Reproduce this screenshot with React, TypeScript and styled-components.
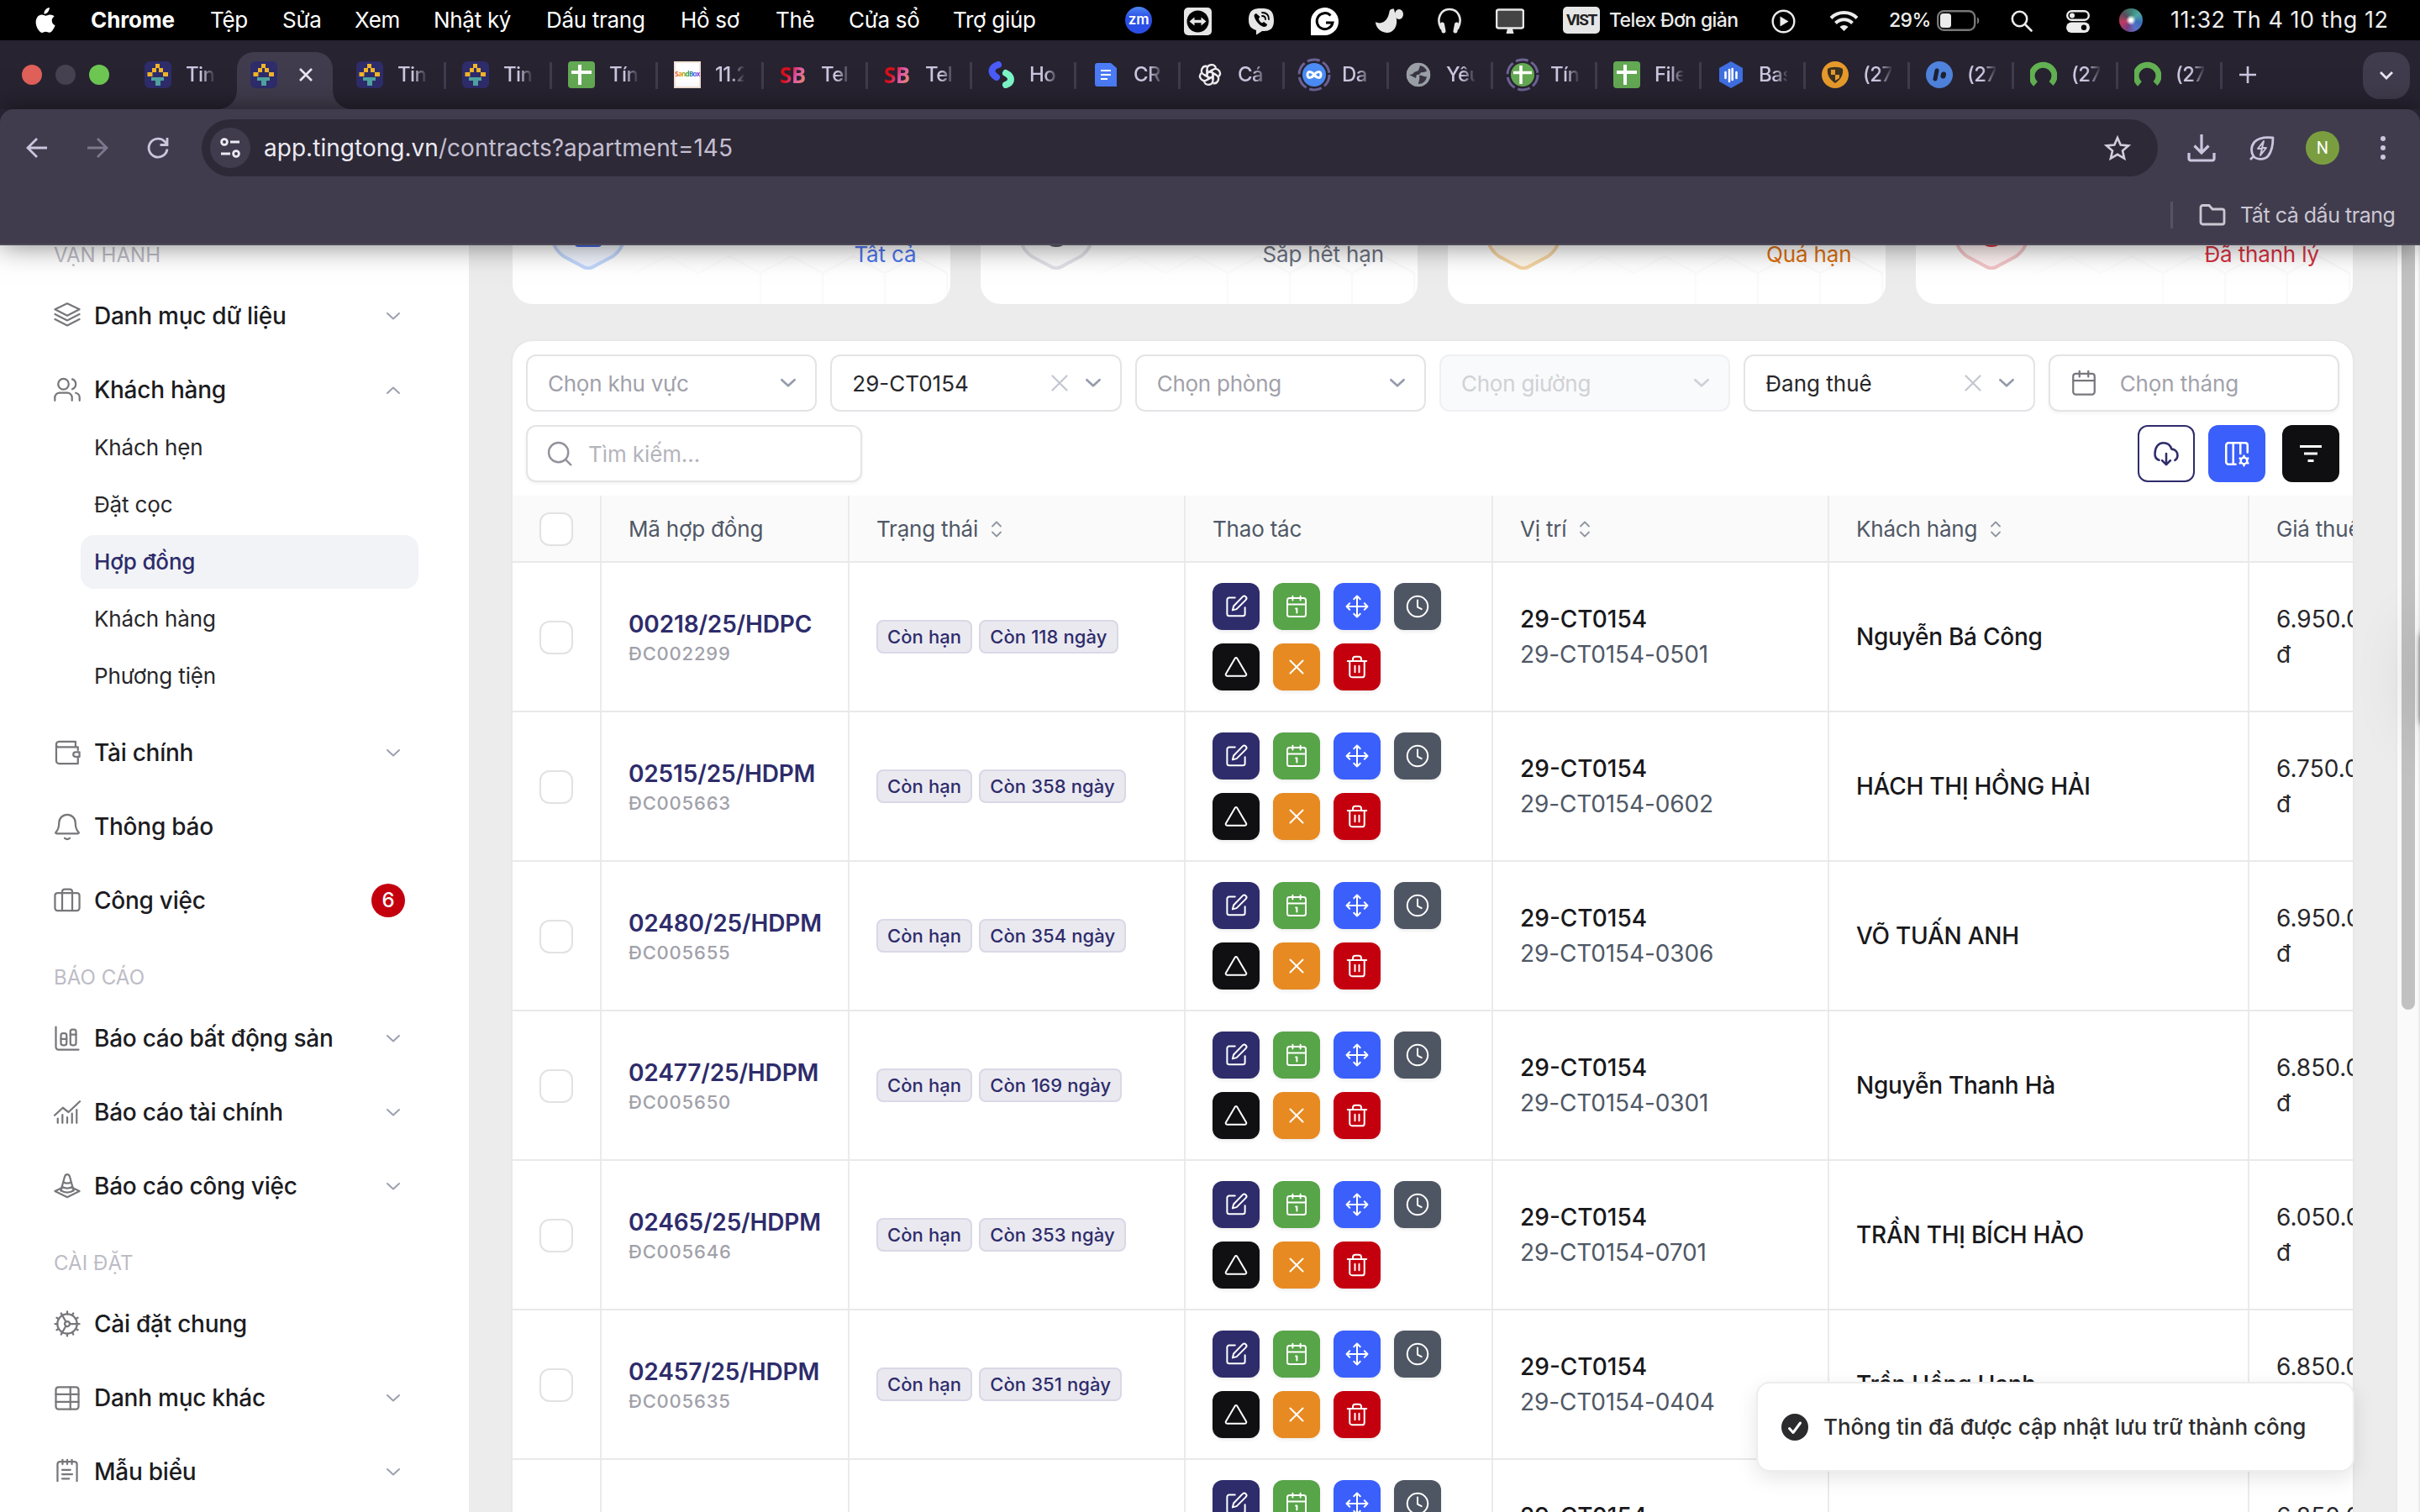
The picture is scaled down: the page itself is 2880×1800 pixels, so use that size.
import React from "react";
import styled, { createGlobalStyle, css } from "styled-components";

const GlobalStyle = createGlobalStyle`
  *, *::before, *::after { box-sizing: border-box; }
  html, body { margin: 0; padding: 0; }
  body {
    width: 2880px;
    height: 1800px;
    overflow: hidden;
    background: #ececec;
    font-family: Inter, "Liberation Sans", sans-serif;
    color: #18181b;
  }
  svg { display: block; flex: none; }
`;

const navy = "#2e2c6b";

/* ---------- shared ---------- */

const Screen = styled.div`
  width: 2880px;
  height: 1800px;
  display: flex;
  flex-direction: column;
  overflow: hidden;
  position: relative;
`;

type IconProps = {
  size?: number;
  color?: string;
  sw?: number;
  children: React.ReactNode;
};

const Icon = ({ size = 36, color = "currentColor", sw = 1.4, children }: IconProps) => (
  <svg
    width={size}
    height={size}
    viewBox="0 0 24 24"
    fill="none"
    stroke={color}
    strokeWidth={sw}
    strokeLinecap="round"
    strokeLinejoin="round"
  >
    {children}
  </svg>
);

/* ---------- macOS menu bar ---------- */

const MenuBar = styled.div`
  height: 48px;
  flex: none;
  background: #000;
  color: #fff;
  display: flex;
  justify-content: space-between;
  font-size: 26px;
  line-height: 48px;
  padding-bottom: 2px;
  white-space: nowrap;
`;

const MenuLeft = styled.div`
  display: grid;
  grid-template-columns: 68px 142px 86px 86px 94px 134px 160px 113px 87px 124px 110px;
  padding-left: 40px;
  align-items: center;
  letter-spacing: -0.3px;
`;

const AppName = styled.b`
  font-weight: 700;
  letter-spacing: -0.1px;
`;

const MenuRight = styled.div`
  display: grid;
  grid-template-columns: 70px 76px 75px 77px 73px 70px 80px 55px 193px 69px 71px 57px 88px 66px 63px 61px 259px;
  padding-right: 38px;
  align-items: center;
  letter-spacing: -0.3px;
  color: #ececec;
  & > svg { margin-top: 2px; }
`;

const Zm = styled.span`
  width: 32px;
  height: 32px;
  border-radius: 50%;
  background: linear-gradient(#4e86f2, #2b4fe6 40%);
  color: #fff;
  font-size: 17px;
  font-weight: 600;
  line-height: 30px;
  text-align: center;
`;

const InputBadge = styled.span`
  width: 44px;
  height: 32px;
  border-radius: 5px;
  background: #e6e6e6;
  color: #222;
  font: 700 19px/32px "Liberation Sans Narrow", "Roboto", sans-serif;
  letter-spacing: -1.4px;
  text-align: center;
`;

const SmallText = styled.span`
  font-size: 23px;
  letter-spacing: -0.6px;
  font-weight: 500;
`;

const Clock = styled.span`
  font-size: 27px;
  letter-spacing: 0.55px;
`;

const Siri = styled.span`
  width: 28px;
  height: 28px;
  border-radius: 50%;
  background: radial-gradient(circle at 50% 50%, #fff 0 8%, transparent 30%),
    conic-gradient(#3e7f72, #4da7a0, #3a6fb8, #5a6fc8, #7a3d7e, #c03a62, #5a4a5a, #3e7f72);
`;

const MacMenu = () => (
  <MenuBar>
    <MenuLeft>
      <svg width="27" height="33" viewBox="0 0 27 33" fill="#fff">
        <path d="M18.8 1c.2 2-.6 3.900-1.700 5.200-1.200 1.400-3 2.400-4.700 2.300-.2-1.900.7-3.900 1.800-5.100C15.400 2 17.300 1.100 18.800 1zM24.600 11.500c-1.800 1.200-2.900 2.900-2.900 5.100 0 2.600 1.500 4.700 3.900 5.600-.6 1.900-1.500 3.700-2.700 5.400-1.100 1.600-2.300 3.200-4.100 3.200-1.800 0-2.300-1-4.400-1-2.100 0-2.700 1.100-4.400 1.100-1.800.1-3.100-1.700-4.300-3.300-2.500-3.500-4.400-10-1.800-14.400 1.200-2.200 3.500-3.600 5.900-3.600 1.800 0 3.500 1.200 4.600 1.200 1.100 0 3.200-1.500 5.400-1.300 1.500.1 3.500.6 4.800 2z" />
      </svg>
      <AppName>Chrome</AppName>
      <span>Tệp</span>
      <span>Sửa</span>
      <span>Xem</span>
      <span>Nhật ký</span>
      <span>Dấu trang</span>
      <span>Hồ sơ</span>
      <span>Thẻ</span>
      <span>Cửa sổ</span>
      <span>Trợ giúp</span>
    </MenuLeft>
    <MenuRight>
      <Zm>zm</Zm>
      <svg width="33" height="33" viewBox="0 0 33 33">
        <rect width="33" height="33" rx="5" fill="#e6e6e6" />
        <circle cx="16.500" cy="16.500" r="13" fill="#000" />
        <path d="M6.500 16.500l6-5v3.300h8v-3.300l6 5-6 5v-3.300h-8v3.300z" fill="#e6e6e6" />
      </svg>
      <svg width="32" height="33" viewBox="0 0 32 33">
        <path d="M16 1c9 0 15 2 15 14s-6 13-14 13l-7 4.500v-5.500C4 25 1 22 1 15 1 3 7 1 16 1z" fill="#e6e6e6" />
        <path d="M10 7c-3 1-3 3-1 7s6 8 10 9c3 0 4-2 4-3l-4-3-2 1.500c-3-1.500-4-4-4-5.500l1.500-2z" fill="#000" />
        <path d="M17 6c5 0 8 3 8 8M17 10c2.500 0 4 1.500 4 4" stroke="#000" strokeWidth="1.800" fill="none" strokeLinecap="round" />
      </svg>
      <svg width="33" height="33" viewBox="0 0 33 33">
        <path d="M0 33V17a16.500 16.500 0 1 1 16.500 16z" fill="#fff" />
        <path d="M23.500 9.500a9.500 9.500 0 1 0 2.500 8.500h-8" stroke="#000" strokeWidth="3" fill="none" />
      </svg>
      <svg width="34" height="34" viewBox="0 0 34 34" fill="#e6e6e6">
        <ellipse cx="28" cy="9" rx="5" ry="6" />
        <path d="M17 4c1-1 5-2 5-1 1 4 2 8 3 12 1 8-3 16-12 16-9-1-13-8-13-13 5 3 10 1 13-3 3-4 3-8 4-11z" />
      </svg>
      <svg width="30" height="32" viewBox="0 0 30 32" fill="none" stroke="#e6e6e6" strokeLinecap="round">
        <path d="M5 25C-1 14 4 2 15 2s16 12 10 23" strokeWidth="2.600" />
        <path d="M6.500 20l1.500 8M23.500 20L22 28" strokeWidth="5" />
      </svg>
      <svg width="34" height="32" viewBox="0 0 34 32">
        <rect x="1" y="2.500" width="32" height="22" rx="2.500" fill="#444" stroke="#e6e6e6" strokeWidth="2.600" />
        <path d="M14 25h6l1.500 6h-9z" fill="#e6e6e6" />
      </svg>
      <InputBadge>VIST</InputBadge>
      <SmallText>Telex Đơn giản</SmallText>
      <svg width="29" height="29" viewBox="0 0 29 29">
        <circle cx="14.500" cy="14.500" r="12.800" fill="none" stroke="#ececec" strokeWidth="2.400" />
        <path d="M10.500 8.500v12l10-6z" fill="#ececec" />
      </svg>
      <svg width="35" height="27" viewBox="0 0 35 27" fill="none" stroke="#ececec" strokeWidth="4">
        <path d="M2 9.500a22 22 0 0 1 31 0" />
        <path d="M7.500 15.500a14 14 0 0 1 20 0" />
        <path d="M17.500 25l-5-5a7 7 0 0 1 10 0z" fill="#ececec" stroke="none" />
      </svg>
      <SmallText>29%</SmallText>
      <svg width="52" height="26" viewBox="0 0 52 26">
        <rect x="1.200" y="1.200" width="44" height="22.600" rx="7" fill="none" stroke="#777" strokeWidth="2.400" />
        <rect x="4" y="4" width="13" height="17" rx="3.500" fill="#ececec" />
        <path d="M48 8.500c3 1 3 7 0 8z" fill="#777" />
      </svg>
      <svg width="27" height="27" viewBox="0 0 27 27" fill="none" stroke="#ececec" strokeWidth="2.600" strokeLinecap="round">
        <circle cx="10.500" cy="10.500" r="8.700" />
        <path d="M17 17l7.500 7.500" />
      </svg>
      <svg width="28" height="27" viewBox="0 0 28 27">
        <rect x="1.200" y="1.200" width="25.600" height="10.600" rx="5.300" fill="none" stroke="#ececec" strokeWidth="2.400" />
        <circle cx="7" cy="6.500" r="3" fill="#ececec" />
        <rect y="14.500" width="28" height="12.500" rx="6.250" fill="#ececec" />
        <circle cx="21" cy="20.700" r="3.200" fill="#000" />
      </svg>
      <Siri />
      <Clock>11:32 Th 4 10 thg 12</Clock>
    </MenuRight>
  </MenuBar>
);

/* ---------- browser tabs ---------- */

const TabStrip = styled.div`
  height: 82px;
  flex: none;
  background: #272331;
  display: flex;
  align-items: stretch;
  color: #cbc5de;
`;

const Lights = styled.div`
  width: 150px;
  padding: 29px 0 0 26px;
  display: flex;
  gap: 16px;
`;

const Light = styled.span<{ $c: string }>`
  width: 24px;
  height: 24px;
  border-radius: 50%;
  background: ${(p) => p.$c};
`;

const Tab = styled.div<{ $w: number; $sep?: boolean }>`
  width: ${(p) => p.$w}px;
  flex: none;
  display: flex;
  align-items: center;
  gap: 17px;
  position: relative;
  background: ${(p) =>
    p.$sep ? "linear-gradient(#403c4d, #403c4d) 0 26px / 3px 32px no-repeat" : "none"};
  padding: 0 0 0 22px;
`;

const TabTitle = styled.span`
  width: 34px;
  overflow: hidden;
  white-space: nowrap;
  font-size: 24px;
  line-height: 34px;
  letter-spacing: -0.6px;
  font-weight: 500;
  mask-image: linear-gradient(90deg, #000 55%, rgba(0, 0, 0, 0.1) 100%);
`;

const ActiveShape = styled.span`
  position: absolute;
  left: 6px;
  right: 6px;
  top: 14px;
  bottom: 0;
  background: #403c4d;
  border-radius: 20px 20px 0 0;
  &::before, &::after {
    content: "";
    position: absolute;
    bottom: 0;
    width: 22px;
    height: 22px;
  }
  &::before {
    left: -22px;
    background: radial-gradient(circle at 0 0, transparent 21.500px, #403c4d 22px);
  }
  &::after {
    right: -22px;
    background: radial-gradient(circle at 100% 0, transparent 21.500px, #403c4d 22px);
  }
`;

const ActiveContent = styled.span`
  position: relative;
  display: flex;
  align-items: center;
  gap: 24px;
`;

const TabEnd = styled.div`
  flex: 1;
  display: flex;
  align-items: center;
  justify-content: space-between;
  padding: 0 12px 0 22px;
  background: linear-gradient(#403c4d, #403c4d) 0 26px / 3px 32px no-repeat;
`;

const TabSearch = styled.div`
  width: 56px;
  height: 56px;
  border-radius: 20px;
  background: #403c4d;
  display: flex;
  align-items: center;
  justify-content: center;
  margin-top: 1px;
`;

const SbMark = styled.span`
  width: 32px;
  font: 700 26px/32px "Open Sans", sans-serif;
  letter-spacing: -0.5px;
  background: linear-gradient(115deg, #d8101c 35%, #e05bb0 60%, #e9a23c);
  background-clip: text;
  -webkit-background-clip: text;
  color: transparent;
`;

const SandBoxFrame = styled.span`
  background: #fff;
  border: 2px solid #f3e3d6;
  width: 32px;
  height: 32px;
  flex: none;
  display: flex;
  justify-content: center;
`;

const SandBox = styled.span`
  font: 700 8px/26px "Open Sans", sans-serif;
  letter-spacing: -0.7px;
  background: linear-gradient(90deg, #e33, #e90, #3a3, #36e, #93c);
  background-clip: text;
  -webkit-background-clip: text;
  color: transparent;
`;

const TingIcon = () => (
  <svg width="32" height="32" viewBox="0 0 32 32">
    <rect width="32" height="32" rx="6" fill="#2e2c6b" />
    <g fill="#f0b429">
      <rect x="13" y="3" width="5" height="5" />
      <rect x="9" y="8" width="5" height="5" />
      <rect x="17" y="8" width="5" height="5" />
      <rect x="3.500" y="13" width="6" height="5" />
      <rect x="22" y="13" width="6" height="5" />
    </g>
    <path d="M8 19h15v4h-4v6h-6v-6H8z" fill="#4fa3a0" />
  </svg>
);

const SheetIcon = () => (
  <svg width="32" height="32" viewBox="0 0 32 32">
    <rect width="32" height="32" rx="4" fill="#63a853" />
    <path d="M14 4v24M4 13h24" stroke="#fff" strokeWidth="4" />
  </svg>
);

const HoIcon = () => (
  <svg width="32" height="32" viewBox="0 0 32 32" fill="none" strokeWidth="8" strokeLinecap="round">
    <path d="M12 4C3 7 2 14 10 19" stroke="#4b5bf7" />
    <path d="M21 14c8 4 8 11 0 14" stroke="#7cf5c6" />
  </svg>
);

const DocIcon = () => (
  <svg width="32" height="32" viewBox="0 0 32 32">
    <path d="M6 2h16l7 6v22H6a3 3 0 0 1-3-3V5a3 3 0 0 1 3-3z" fill="#4b7bf5" />
    <path d="M10 11h12M10 16h12M10 21h8" stroke="#fff" strokeWidth="2.200" />
  </svg>
);

const GptIcon = () => (
  <svg width="32" height="32" viewBox="0 0 32 32" fill="none" stroke="#eee" strokeWidth="2.300">
    {[0, 60, 120, 180, 240, 300].map((a) => (
      <path key={a} transform={`rotate(${a} 16 16)`} d="M12.500 18V9.500c0-6 8.500-7.500 10.500-1.500M12.500 14l7-4" />
    ))}
  </svg>
);

const RingSvg = styled.svg`
  margin: 0 -4px;
`;

const RingDash = ({ fill, children }: { fill: string; children: React.ReactNode }) => (
  <RingSvg width="40" height="40" viewBox="0 0 40 40">
    <circle cx="20" cy="20" r="18" fill="none" stroke="#6d6394" strokeWidth="3" strokeDasharray="15 4" />
    <circle cx="20" cy="20" r="14" fill={fill} />
    {children}
  </RingSvg>
);

const InfinityIcon = () => (
  <RingDash fill="#4b8cf5">
    <path d="M20 20c-3-4-8-5-8 0s5 4 8 0 8-5 8 0-5 4-8 0z" fill="none" stroke="#fff" strokeWidth="3" />
  </RingDash>
);

const SheetRound = () => (
  <RingDash fill="#63a853">
    <path d="M18 9v22M9 17.500h22" stroke="#fff" strokeWidth="3.600" />
  </RingDash>
);

const GlobeIcon = () => (
  <svg width="32" height="32" viewBox="0 0 32 32">
    <circle cx="16" cy="16" r="14" fill="#9aa0a6" />
    <path d="M18 5c4 1 7 3 8 7-3 0-4 2-7 1-1 3-3 3-5 3l-1 4-8-4c3 0 5-1 6-3l5-2zM17 17c4-1 5 2 9 1-1 6-5 9-10 9 0-3 2-4 1-10z" fill="#272331" opacity=".85" />
    <circle cx="16" cy="16" r="13" fill="none" stroke="#9aa0a6" strokeWidth="2.500" />
  </svg>
);

const HexIcon = () => (
  <svg width="32" height="32" viewBox="0 0 32 32">
    <path d="M16 0l14 8v16l-14 8-14-8V8z" fill="#3f6fe0" />
    <path d="M9.500 13v7M14 10v14M17.700 9v13M22.500 13v7" stroke="#fff" strokeWidth="2.600" strokeLinecap="round" />
  </svg>
);

const ShieldOrange = () => (
  <svg width="32" height="32" viewBox="0 0 32 32">
    <circle cx="16" cy="16" r="16" fill="#e79a2b" />
    <path d="M7 9c4-3 14-3 18 0 1 8-3 13-9 17-6-4-10-9-9-17z" fill="#3c3224" />
    <path d="M11 10h5v6h5v4l-5 3v-7h-5z" fill="#e79a2b" />
  </svg>
);

const SlashBlue = () => (
  <svg width="32" height="32" viewBox="0 0 32 32">
    <circle cx="16" cy="16" r="16" fill="#4f83dc" />
    <path d="M13 11l-2 10" stroke="#1d2233" strokeWidth="5" strokeLinecap="round" />
    <path d="M21 15.500l-.5 2" stroke="#1d2233" strokeWidth="6" strokeLinecap="round" />
  </svg>
);

const GreenArc = () => (
  <svg width="32" height="32" viewBox="0 0 32 32" fill="none">
    <path d="M6.500 27A13.500 13 0 1 1 25 26.500" stroke="#62b152" strokeWidth="7" />
    <path d="M8 31l3-7M23 31l-3-7" stroke="#272331" strokeWidth="2" />
  </svg>
);

const Sandbox = () => (
  <SandBoxFrame>
    <SandBox>SandBox</SandBox>
  </SandBoxFrame>
);

const Sb = () => <SbMark>SB</SbMark>;

const tabs: { icon: React.FC; title: string; w: number; sep: boolean; active?: boolean }[] = [
  { icon: TingIcon, title: "Tin", w: 126, sep: false },
  { icon: TingIcon, title: "", w: 126, sep: false, active: true },
  { icon: TingIcon, title: "Tin", w: 126, sep: false },
  { icon: TingIcon, title: "Tin", w: 126, sep: true },
  { icon: SheetIcon, title: "Tín", w: 126, sep: true },
  { icon: Sandbox, title: "11.2", w: 126, sep: true },
  { icon: Sb, title: "Tel", w: 124, sep: true },
  { icon: Sb, title: "Tel", w: 124, sep: true },
  { icon: HoIcon, title: "Ho", w: 124, sep: true },
  { icon: DocIcon, title: "CR", w: 124, sep: true },
  { icon: GptIcon, title: "Cá", w: 124, sep: true },
  { icon: InfinityIcon, title: "Da", w: 124, sep: true },
  { icon: GlobeIcon, title: "Yêu", w: 124, sep: true },
  { icon: SheetRound, title: "Tín", w: 124, sep: true },
  { icon: SheetIcon, title: "File", w: 124, sep: true },
  { icon: HexIcon, title: "Bas", w: 124, sep: true },
  { icon: ShieldOrange, title: "(27", w: 124, sep: true },
  { icon: SlashBlue, title: "(27", w: 124, sep: true },
  { icon: GreenArc, title: "(27", w: 124, sep: true },
  { icon: GreenArc, title: "(27", w: 124, sep: true },
];

const Tabs = () => (
  <TabStrip>
    <Lights>
      <Light $c="#e0605a" />
      <Light $c="#464251" />
      <Light $c="#6dc752" />
    </Lights>
    {tabs.map((t, i) => (
      <Tab key={i} $w={t.w} $sep={t.sep}>
        {t.active ? (
          <>
            <ActiveShape />
            <ActiveContent>
              <t.icon />
              <svg width="20" height="20" viewBox="0 0 20 20" stroke="#e9e6f2" strokeWidth="2.600">
                <path d="M3 3l14 14M17 3L3 17" />
              </svg>
            </ActiveContent>
          </>
        ) : (
          <>
            <t.icon />
            <TabTitle>{t.title}</TabTitle>
          </>
        )}
      </Tab>
    ))}
    <TabEnd>
      <svg width="22" height="22" viewBox="0 0 22 22" stroke="#cbc5de" strokeWidth="2.600">
        <path d="M11 1v20M1 11h20" />
      </svg>
      <TabSearch>
        <svg width="18" height="12" viewBox="0 0 18 12" fill="none" stroke="#e9e6f2" strokeWidth="2.800">
          <path d="M2 2l7 7 7-7" />
        </svg>
      </TabSearch>
    </TabEnd>
  </TabStrip>
);

/* ---------- browser toolbar ---------- */

const ToolbarWrap = styled.div`
  height: 162px;
  flex: none;
  background: #272331;
  position: relative;
  z-index: 2;
  box-shadow: 0 0 32px rgba(0, 0, 0, 0.5);
`;

const Toolbar = styled.div`
  height: 162px;
  background: #403c4d;
  border-radius: 16px 16px 0 0;
  border-bottom: 2px solid #4c4856;
  padding-top: 12px;
`;

const ToolbarRow = styled.div`
  height: 68px;
  display: flex;
  align-items: center;
`;

const NavGroup = styled.div`
  width: 240px;
  display: flex;
  padding-left: 30px;
  gap: 44px;
`;

const UrlBar = styled.div`
  width: 2328px;
  height: 68px;
  border-radius: 34px;
  background: #2d2937;
  display: flex;
  align-items: center;
  padding: 0 32px 0 10px;
`;

const SiteInfo = styled.span`
  width: 48px;
  height: 48px;
  border-radius: 50%;
  background: #403c4d;
  display: flex;
  align-items: center;
  justify-content: center;
`;

const Url = styled.span`
  flex: 1;
  padding-left: 16px;
  font-size: 28px;
  letter-spacing: 0.03px;
  color: #c4bfd0;
  em {
    font-style: normal;
    color: #eceaf2;
  }
`;

const ToolIcons = styled.div`
  flex: 1;
  display: grid;
  grid-template-columns: repeat(4, 72px);
  justify-items: center;
  align-items: center;
  padding-left: 16px;
`;

const Avatar = styled.span`
  width: 40px;
  height: 40px;
  border-radius: 50%;
  background: #7a9e3f;
  color: #fff;
  font: 400 20px/40px Roboto, sans-serif;
  text-align: center;
`;

const BookmarkRow = styled.div`
  height: 80px;
  display: flex;
  align-items: center;
  justify-content: flex-end;
  padding: 12px 31px 0 0;
  color: #cbc7d3;
  font-size: 25px;
  letter-spacing: -0.48px;
`;

const BookmarkSep = styled.span`
  width: 3px;
  height: 32px;
  background: #575365;
  margin-right: 31px;
`;

const BookmarkLabel = styled.span`
  width: 183px;
  margin-left: 17px;
  white-space: nowrap;
`;

const BrowserToolbar = () => (
  <ToolbarWrap>
    <Toolbar>
      <ToolbarRow>
        <NavGroup>
          <svg width="28" height="28" viewBox="0 0 28 28" fill="none" stroke="#cbc5de" strokeWidth="2.800">
            <path d="M26 14H3M14 3L3 14l11 11" />
          </svg>
          <svg width="28" height="28" viewBox="0 0 28 28" fill="none" stroke="#7d788d" strokeWidth="2.800">
            <path d="M2 14h23M14 3l11 11-11 11" />
          </svg>
          <svg width="28" height="28" viewBox="0 0 28 28" fill="none" stroke="#cbc5de" strokeWidth="2.800">
            <path d="M25 15.500A11 11 0 1 1 22.500 7L25 9.500M25 2v8.500h-8.500" />
          </svg>
        </NavGroup>
        <UrlBar>
          <SiteInfo>
            <svg width="26" height="26" viewBox="0 0 26 26" fill="none" stroke="#eceaf2" strokeWidth="2.800">
              <circle cx="6" cy="6" r="3.400" />
              <path d="M13 6h11M2 20h11" />
              <circle cx="20" cy="20" r="3.400" />
            </svg>
          </SiteInfo>
          <Url>
            <em>app.tingtong.vn</em>/contracts?apartment=145
          </Url>
          <svg width="32" height="32" viewBox="0 0 32 32" fill="none" stroke="#d2cfda" strokeWidth="2.600">
            <path d="M16 4l3.700 8.600 9.300.8-7 6.100 2.100 9.100-8.100-4.800-8.100 4.800L10 19.500l-7-6.100 9.300-.8z" />
          </svg>
        </UrlBar>
        <ToolIcons>
          <svg width="34" height="34" viewBox="0 0 34 34" fill="none" stroke="#cbc5de" strokeWidth="3.200">
            <path d="M17 1v22M8.500 14.500L17 23l8.500-8.500M2 23v7c0 1 1 2 2 2h26c1 0 2-1 2-2v-7" />
          </svg>
          <svg width="32" height="32" viewBox="0 0 32 32" fill="none" stroke="#cbc5de" strokeWidth="2.800" strokeLinejoin="round">
            <path d="M2 30l4-4c3 4 12 5 17 0 5-6 6-13 6-22-9-1-17 0-22 5-5 6-4 13-1 17" />
            <path d="M18 8l-7 9h5l-2 8 7-9h-5z" strokeWidth="2" />
          </svg>
          <Avatar>N</Avatar>
          <svg width="8" height="30" viewBox="0 0 8 30" fill="#cbc5de">
            <circle cx="4" cy="4" r="3" />
            <circle cx="4" cy="15" r="3" />
            <circle cx="4" cy="26" r="3" />
          </svg>
        </ToolIcons>
      </ToolbarRow>
      <BookmarkRow>
        <BookmarkSep />
        <svg width="32" height="26" viewBox="0 0 32 26" fill="none" stroke="#cbc7d3" strokeWidth="2.800">
          <path d="M2 4c0-1.500 1-2.500 2.500-2.500H12l4 4.500h11.500C29 6 30 7 30 8.500v13c0 1.500-1 2.500-2.500 2.500h-23C3 24 2 23 2 21.500z" />
        </svg>
        <BookmarkLabel>Tất cả dấu trang</BookmarkLabel>
      </BookmarkRow>
    </Toolbar>
  </ToolbarWrap>
);

/* ---------- sidebar ---------- */

const Page = styled.div`
  flex: 1;
  min-height: 0;
  display: flex;
`;

const SidebarWrap = styled.aside`
  width: 558px;
  flex: none;
  background: #fff;
`;

const Sidebar = styled.nav`
  height: 1472px;
  overflow: hidden;
`;

const SectionLabel = styled.div<{ $first?: boolean }>`
  margin: ${(p) => (p.$first ? "-10px" : "34px")} 0 18px 64px;
  height: 40px;
  line-height: 43px;
  font-size: 24px;
  letter-spacing: 0.05px;
  color: #bdbcc6;
`;

const NavItem = styled.div`
  height: 72px;
  margin-bottom: 16px;
  padding: 0 82px 0 62px;
  display: flex;
  align-items: center;
  color: #71717a;
  &:has(+ ${SectionLabel}) { margin-bottom: 0; }
`;

const NavText = styled.span`
  flex: 1;
  margin-left: 14px;
  font-size: 28px;
  font-weight: 500;
  letter-spacing: -0.25px;
  color: #1c1c1f;
  white-space: nowrap;
`;

const SubList = styled.div`
  margin: -15px 60px 23px 96px;
  display: flex;
  flex-direction: column;
  gap: 4px;
`;

const SubItem = styled.div<{ $active?: boolean }>`
  height: 64px;
  line-height: 64px;
  border-radius: 16px;
  padding-left: 16px;
  font-size: 26px;
  letter-spacing: -0.15px;
  color: ${(p) => (p.$active ? navy : "#27272a")};
  font-weight: ${(p) => (p.$active ? 500 : 400)};
  background: ${(p) => (p.$active ? "#f2f3f6" : "transparent")};
`;

const CountBadge = styled.span`
  width: 40px;
  height: 40px;
  border-radius: 50%;
  margin-right: -6px;
  background: #c4000f;
  color: #fff;
  font-size: 24px;
  font-weight: 500;
  line-height: 40px;
  text-align: center;
`;

const Chevron = ({ up, w = 18, color = "#9ca0b0", sw = 2 }: { up?: boolean; w?: number; color?: string; sw?: number }) => (
  <svg width={w} height={w / 2 + 2} viewBox="0 0 18 11" fill="none" stroke={color} strokeWidth={sw} strokeLinecap="round" strokeLinejoin="round">
    <path d={up ? "M2 9l7-6.500L16 9" : "M2 2l7 6.500L16 2"} />
  </svg>
);

const NavChevron = styled.span`
  margin-right: -1px;
`;

const icons = {
  layers: (
    <>
      <path d="M12 2.200l9.700 4.700L12 11.900 2.300 6.900z" />
      <path d="M2.300 10.700l9.700 4.900 9.700-4.900M2.300 14.700l9.700 4.900 9.700-4.900" />
    </>
  ),
  users: (
    <>
      <circle cx="9" cy="7.500" r="4.200" />
      <path d="M2.200 20.500v-2.300A3.800 3.800 0 0 1 6 14.400h6a3.800 3.800 0 0 1 3.800 3.800v2.300M16 3.600a4.200 4.200 0 0 1 0 7.900M21.800 20.500v-2.300a3.900 3.900 0 0 0-3-3.700" />
    </>
  ),
  wallet: (
    <>
      <path d="M20.500 10V7.500H4.500a1.800 1.800 0 0 1-1.200-1.800A2.200 2.200 0 0 1 5.400 3.300h13.200v4M3.300 5.700v12.800c0 1.200 1 2.200 2.200 2.200h15v-4.500" />
      <path d="M21.700 11.500h-3a1.900 1.900 0 0 0 0 3.800h3z" />
    </>
  ),
  bell: (
    <path d="M12 2.500a6.500 6.500 0 0 1 6.500 6.500c0 4.500 1.200 6.200 2.500 7.500.5.700 0 1-.5 1h-17c-.5 0-1-.3-.5-1 1.300-1.300 2.500-3 2.500-7.500A6.500 6.500 0 0 1 12 2.500zM10 21.200a3.200 3.200 0 0 0 4 0" />
  ),
  suitcase: (
    <>
      <rect x="2.300" y="6" width="19.400" height="14" rx="2" />
      <path d="M8 20V5a2 2 0 0 1 2-2h4a2 2 0 0 1 2 2v15" />
    </>
  ),
  bars: (
    <>
      <path d="M3 3v16a2 2 0 0 0 2 2h16" />
      <rect x="7" y="8" width="4.500" height="9.500" rx="1.600" />
      <rect x="14.500" y="5" width="4.500" height="12.500" rx="1.600" />
      <path d="M7 12.500h4.500M14.500 9h4.500" />
    </>
  ),
  growth: (
    <>
      <path d="M2 14.500l6.500-6 4.500 3.500L22 3.500" />
      <path d="M4.500 17v3.500M8.200 14v6.500M12 16v4.500M15.800 13v7.500M19.500 10v10.500" />
    </>
  ),
  cone: (
    <>
      <path d="M7 15.500L10 4.500c.7-2.300 3.300-2.300 4 0l3 11M8.800 8.800c2 1.200 4.400 1.200 6.400 0M7.700 12.500c2.800 1.600 5.800 1.600 8.600 0" />
      <path d="M7.500 13.500L2.300 16 12 20.800 21.700 16l-5.200-2.500M7 15.500c3 2 7 2 10 0" />
    </>
  ),
  gear: (
    <>
      <circle cx="12" cy="12" r="7.800" />
      <circle cx="12" cy="12" r="2" />
      {[0, 30, 60, 90, 120, 150, 180, 210, 240, 270, 300, 330].map((a) => (
        <path key={a} transform={`rotate(${a} 12 12)`} d="M12 4.200V2.300" />
      ))}
      <path d="M14 12h5.800M11 10.300L8.100 5.300M11 13.700l-2.900 5" />
    </>
  ),
  table: (
    <>
      <rect x="3" y="3.500" width="18" height="17.500" rx="2" />
      <path d="M3 9.300h18M3 15.200h18M14.500 3.500V21" />
    </>
  ),
  note: (
    <>
      <path d="M4.300 24V6c0-1.100.9-2 2-2h11.400c1.100 0 2 .9 2 2v18M8.300 2.500V6M12 2.500V6M15.700 2.500V6M8 10.500h6.500M8 14h8M8 17.500h5.500" />
    </>
  ),
};

const NavRow = ({ icon, label, chevron }: { icon: keyof typeof icons; label: string; chevron?: "up" | "down" }) => (
  <NavItem>
    <Icon color="#77777b" sw={1.5}>{icons[icon]}</Icon>
    <NavText>{label}</NavText>
    {chevron && (
      <NavChevron>
        <Chevron up={chevron === "up"} />
      </NavChevron>
    )}
    {icon === "suitcase" && <CountBadge>6</CountBadge>}
  </NavItem>
);

const SideNav = () => (
  <SidebarWrap>
    <Sidebar>
      <SectionLabel $first>VẬN HÀNH</SectionLabel>
      <NavRow icon="layers" label="Danh mục dữ liệu" chevron="down" />
      <NavRow icon="users" label="Khách hàng" chevron="up" />
      <SubList>
        <SubItem>Khách hẹn</SubItem>
        <SubItem>Đặt cọc</SubItem>
        <SubItem $active>Hợp đồng</SubItem>
        <SubItem>Khách hàng</SubItem>
        <SubItem>Phương tiện</SubItem>
      </SubList>
      <NavRow icon="wallet" label="Tài chính" chevron="down" />
      <NavRow icon="bell" label="Thông báo" />
      <NavRow icon="suitcase" label="Công việc" />
      <SectionLabel>BÁO CÁO</SectionLabel>
      <NavRow icon="bars" label="Báo cáo bất động sản" chevron="down" />
      <NavRow icon="growth" label="Báo cáo tài chính" chevron="down" />
      <NavRow icon="cone" label="Báo cáo công việc" chevron="down" />
      <SectionLabel>CÀI ĐẶT</SectionLabel>
      <NavRow icon="gear" label="Cài đặt chung" />
      <NavRow icon="table" label="Danh mục khác" chevron="down" />
      <NavRow icon="note" label="Mẫu biểu" chevron="down" />
    </Sidebar>
  </SidebarWrap>
);

/* ---------- stat cards ---------- */

const Main = styled.main`
  flex: 1;
  min-width: 0;
  padding: 0 51px 0 52px;
  display: flex;
  flex-direction: column;
`;

const StatRow = styled.div`
  height: 70px;
  flex: none;
  display: grid;
  grid-template-columns: repeat(4, 1fr);
  gap: 36px;
  align-content: end;
  overflow: hidden;
`;

const StatCard = styled.div`
  height: 160px;
  border-radius: 24px;
  background: #fff;
  position: relative;
  overflow: hidden;
  display: flex;
  justify-content: space-between;
  align-items: flex-end;
  padding: 0 40px 41px 45px;
`;

const StatLabel = styled.span<{ $c: string }>`
  position: relative;
  font-size: 26px;
  line-height: 36px;
  letter-spacing: -0.15px;
  color: ${(p) => p.$c};
`;

const PatternSvg = styled.svg`
  position: absolute;
  right: 0;
  bottom: 0;
  mask-image: linear-gradient(90deg, rgba(0, 0, 0, 0.4), #000);
`;

const HexPattern = () => (
  <PatternSvg width="380" height="70" viewBox="0 0 380 70" fill="none" stroke="#f9f9fa" strokeWidth="2.500">
    <path d="M4 33L43 13l37 20 37-20 37 20 37-20 37 20 37-20 37 20 37-20 37 20M154 33v37M228 33v37M302 33v37M376 33v37" />
  </PatternSvg>
);

const Shield = ({ line, fill, dot, square }: { line: string; fill: string; dot?: string; square?: boolean }) => (
  <svg width="90" height="100" viewBox="0 0 90 100">
    <path
      d="M2.500 58V36c0-6 3-11 8-14L35 6c6-4 14-4 20 0l24.500 16c5 3 8 8 8 14v22c0 12-4 19-13 26L53 95.500c-5 3.500-11 3.500-16 0L15.500 84C6.500 77 2.500 70 2.500 58z"
      fill={fill}
      stroke={line}
      strokeWidth="4"
    />
    {dot && (
      <rect x={square ? 29 : 32} y="52" width={square ? 32 : 26} height="21" rx={square ? 4 : 12} fill={dot} />
    )}
  </svg>
);

const stats = [
  { label: "Tất cả", c: "#4c74ee", line: "#c0d6fb", fill: "#eff3fc", dot: "#3f63e8", square: true },
  { label: "Sắp hết hạn", c: "#6b7080", line: "#e0e1e6", fill: "#fafafb", dot: "#555a68" },
  { label: "Quá hạn", c: "#db6e0c", line: "#f4d3a0", fill: "#fdf6ea" },
  { label: "Đã thanh lý", c: "#d6303f", line: "#f2c4c6", fill: "#fdf0f0", dot: "#e03038" },
];

/* ---------- filters ---------- */

const Panel = styled.section`
  margin-top: 44px;
  flex: 1;
  min-height: 0;
  background: #fff;
  border-radius: 24px 24px 0 0;
  box-shadow: 0 0 0 2px #e8e8e9;
  overflow: hidden;
`;

const Filters = styled.div`
  height: 184px;
  padding: 16px;
  display: flex;
  flex-direction: column;
  gap: 16px;
`;

const FilterGrid = styled.div`
  display: grid;
  grid-template-columns: repeat(6, 1fr);
  gap: 16px;
`;

const field = css`
  height: 68px;
  border: 2px solid #e4e4e7;
  border-radius: 12px;
  background: #fff;
  display: flex;
  align-items: center;
  font-size: 26px;
  letter-spacing: -0.1px;
  white-space: nowrap;
`;

const Select = styled.div<{ $filled?: boolean; $disabled?: boolean }>`
  ${field}
  padding: 0 22px 0 24px;
  letter-spacing: ${(p) => (p.$filled ? "0" : "-0.25px")};
  color: ${(p) => (p.$filled ? "#27272a" : p.$disabled ? "#d0d1d6" : "#a1a1aa")};
  ${(p) => p.$disabled && "background: #f9fafb; border-color: #f0f0f3;"}
  span { flex: 1; }
  svg + svg { margin-left: 20px; }
`;

const MonthField = styled.div`
  ${field}
  padding-left: 22px;
  gap: 25px;
  color: #a1a1aa;
  box-shadow: 0 2px 4px rgba(0, 0, 0, 0.05);
`;

const ActionsRow = styled.div`
  display: flex;
  align-items: center;
`;

const Search = styled.div`
  ${field}
  width: 400px;
  padding-left: 22px;
  gap: 18px;
  color: #b4b4bc;
  margin-right: auto;
  box-shadow: 0 2px 4px rgba(0, 0, 0, 0.05);
`;

const ToolButton = styled.button<{ $bg: string; $outline?: boolean; $ml: number }>`
  width: 68px;
  height: 68px;
  margin: 0 0 0 ${(p) => p.$ml}px;
  padding: 0;
  border-radius: 12px;
  border: ${(p) => (p.$outline ? `2px solid ${navy}` : "0")};
  background: ${(p) => p.$bg};
  color: ${(p) => (p.$outline ? navy : "#fff")};
  display: flex;
  align-items: center;
  justify-content: center;
`;

const ClearX = () => (
  <svg width="20" height="20" viewBox="0 0 20 20" stroke="#c3c7d1" strokeWidth="2.200" strokeLinecap="round">
    <path d="M1.500 1.500l17 17M18.500 1.500l-17 17" />
  </svg>
);

const FilterSelect = ({ text, filled, disabled }: { text: string; filled?: boolean; disabled?: boolean }) => (
  <Select $filled={filled} $disabled={disabled}>
    <span>{text}</span>
    {filled && <ClearX />}
    <Chevron w={20} sw={2.4} color={disabled ? "#ccd0d8" : "#949bab"} />
  </Select>
);

const FilterPanel = () => (
  <Filters>
    <FilterGrid>
      <FilterSelect text="Chọn khu vực" />
      <FilterSelect text="29-CT0154" filled />
      <FilterSelect text="Chọn phòng" />
      <FilterSelect text="Chọn giường" disabled />
      <FilterSelect text="Đang thuê" filled />
      <MonthField>
        <Icon size={36} color="#77777d" sw={1.5}>
          <rect x="3.500" y="4.500" width="17" height="16.500" rx="2" />
          <path d="M3.500 10h17M8.500 2.500V7M15.500 2.500V7" />
        </Icon>
        Chọn tháng
      </MonthField>
    </FilterGrid>
    <ActionsRow>
      <Search>
        <Icon size={32} color="#92929c" sw={1.8}>
          <circle cx="11" cy="11" r="8.700" />
          <path d="M17.500 17.500L22 22" />
        </Icon>
        Tìm kiếm...
      </Search>
      <ToolButton $bg="#fff" $outline $ml={0}>
        <Icon size={34} sw={1.8}>
          <path d="M6 17.500A5.500 5.500 0 0 1 2.500 12C2.500 6.500 5.500 3 9.500 3c3.500 0 6 2 7 5.200 3 .3 5 2.300 5 5.300 0 1.800-.8 3.200-2.200 4M12 12v9M8.500 17.700L12 21.200l3.500-3.500" />
        </Icon>
      </ToolButton>
      <ToolButton $bg="#3a5ffb" $ml={16}>
        <Icon size={34} sw={1.8}>
          <path d="M11 21H5a2 2 0 0 1-2-2V5a2 2 0 0 1 2-2h14a2 2 0 0 1 2 2v6M9 3v18M15 3v9" />
          <circle cx="18" cy="18" r="2.700" />
          <path d="M18 14v1M18 21v1M14.600 16l.9.500M20.500 19.500l.9.500M14.600 20l.9-.5M20.500 16.500l.9-.5" />
        </Icon>
      </ToolButton>
      <ToolButton $bg="#0f0f11" $ml={20}>
        <svg width="28" height="24" viewBox="0 0 28 24" stroke="#fff" strokeWidth="3.200">
          <path d="M1 3.500h26M6 12h16M10.500 20.500h7" />
        </svg>
      </ToolButton>
    </ActionsRow>
  </Filters>
);

/* ---------- table ---------- */

const Table = styled.div`
  width: 2267px;
`;

const columns = css`
  display: grid;
  grid-template-columns: 106px 295px 400px 366px 400px 500px 200px;
`;

const HeadRow = styled.div`
  ${columns}
  height: 80px;
  background: #fafafa;
  border-bottom: 2px solid #e9e9ea;
`;

const Row = styled.div`
  ${columns}
  height: 178px;
  background: #fff;
  border-bottom: 2px solid #e9e9ea;
`;

const Cell = styled.div`
  border-right: 2px solid #ebebec;
  padding: 0 32px;
  display: flex;
  flex-direction: column;
  justify-content: center;
  min-width: 0;
`;

const HeadCell = styled(Cell)`
  flex-direction: row;
  justify-content: flex-start;
  align-items: center;
  gap: 15px;
  font-size: 26px;
  letter-spacing: -0.2px;
  color: #4f5866;
  white-space: nowrap;
`;

const CheckCell = styled(Cell)`
  align-items: flex-start;
`;

const Checkbox = styled.span`
  width: 40px;
  height: 40px;
  margin-top: 2px;
  border: 2px solid #e2e2e5;
  border-radius: 12px;
  background: #fff;
  flex: none;
`;

const Code = styled.span`
  font-size: 28px;
  font-weight: 600;
  line-height: 40px;
  letter-spacing: -0.15px;
  color: ${navy};
  white-space: nowrap;
`;

const SubCode = styled.span`
  font-size: 22px;
  line-height: 30px;
  font-weight: 500;
  letter-spacing: 0.8px;
  color: #a1a1aa;
`;

const Chips = styled.div`
  display: flex;
  gap: 8px;
`;

const Chip = styled.span`
  height: 40px;
  padding: 0 11px;
  border: 2px solid #d9d8e6;
  border-radius: 8px;
  background: #eae9f0;
  color: ${navy};
  font-size: 22px;
  font-weight: 500;
  letter-spacing: 0.1px;
  line-height: 36px;
  white-space: nowrap;
`;

const ButtonGrid = styled.div`
  display: grid;
  grid-template-columns: repeat(4, 56px);
  gap: 16px;
`;

const ActionButton = styled.span<{ $bg: string }>`
  width: 56px;
  height: 56px;
  border-radius: 12px;
  background: ${(p) => p.$bg};
  color: #fff;
  display: flex;
  align-items: center;
  justify-content: center;
  box-shadow: 0 2px 4px rgba(0, 0, 0, 0.08);
`;

const Line = styled.span<{ $c: string; $w?: number; $ls?: number }>`
  font-size: 28px;
  line-height: 42px;
  letter-spacing: ${(p) => p.$ls ?? 0}px;
  font-weight: ${(p) => p.$w ?? 400};
  color: ${(p) => p.$c};
  white-space: nowrap;
`;

const SortSvg = styled.svg`
  margin-top: 2px;
`;

const Sort = () => (
  <SortSvg width="14" height="20" viewBox="0 0 14 20" fill="none" stroke="#8f959f" strokeWidth="1.800" strokeLinecap="round" strokeLinejoin="round">
    <path d="M2 6.500l5-5 5 5M2 13.500l5 5 5-5" />
  </SortSvg>
);

const actions: { bg: string; art: React.ReactNode }[] = [
  {
    bg: navy,
    art: <path d="M11 3.500H5.500a2 2 0 0 0-2 2v13.500a2 2 0 0 0 2 2H18.500a2 2 0 0 0 2-2V13M18.300 2.700a2 2 0 0 1 3 3L12.500 14.500 8.700 15.500l1-3.900z" />,
  },
  {
    bg: "#58a449",
    art: (
      <>
        <rect x="3.200" y="4" width="17.600" height="17.500" rx="2" />
        <path d="M3.200 10h17.600M8.300 2.200V6M15.700 2.200V6M11.300 14h1v4" />
      </>
    ),
  },
  {
    bg: "#3a5ffb",
    art: <path d="M12 2v20M2 12h20M9 5l3-3 3 3M9 19l3 3 3-3M5 9l-3 3 3 3M19 9l3 3-3 3" />,
  },
  {
    bg: "#4f5663",
    art: (
      <>
        <circle cx="12" cy="12" r="9.800" />
        <path d="M12 6v6.500l3.800 2" />
      </>
    ),
  },
  { bg: "#101012", art: <path d="M13 3.800l8.700 14.800c.4.900 0 1.900-1.200 1.900h-17c-1.200 0-1.600-1-1.200-1.900L11 3.800c.5-.8 1.500-.8 2 0z" /> },
  { bg: "#e78a22", art: <path d="M6 6l12 12M18 6L6 18" /> },
  {
    bg: "#c4000f",
    art: <path d="M3 6.300h18M5 6.300v13.200a2.300 2.300 0 0 0 2.300 2.300h9.400a2.300 2.300 0 0 0 2.300-2.300V6.300M8 6.300V4.500a2.300 2.300 0 0 1 2.300-2.300h3.400A2.300 2.300 0 0 1 16 4.500v1.800M10 11v6M14 11v6" />,
  },
];

const rows = [
  ["00218/25/HDPC", "ĐC002299", "118", "-0501", "Nguyễn Bá Công", "6.950.000"],
  ["02515/25/HDPM", "ĐC005663", "358", "-0602", "HÁCH THỊ HỒNG HẢI", "6.750.000"],
  ["02480/25/HDPM", "ĐC005655", "354", "-0306", "VÕ TUẤN ANH", "6.950.000"],
  ["02477/25/HDPM", "ĐC005650", "169", "-0301", "Nguyễn Thanh Hà", "6.850.000"],
  ["02465/25/HDPM", "ĐC005646", "353", "-0701", "TRẦN THỊ BÍCH HẢO", "6.050.000"],
  ["02457/25/HDPM", "ĐC005635", "351", "-0404", "Trần Hồng Hạnh", "6.850.000"],
  ["", "", "", "", "", "6.850.000"],
];

const ContractTable = () => (
  <Table>
    <HeadRow>
      <HeadCell>
        <Checkbox />
      </HeadCell>
      <HeadCell>Mã hợp đồng</HeadCell>
      <HeadCell>
        Trạng thái <Sort />
      </HeadCell>
      <HeadCell>Thao tác</HeadCell>
      <HeadCell>
        Vị trí <Sort />
      </HeadCell>
      <HeadCell>
        Khách hàng <Sort />
      </HeadCell>
      <HeadCell>Giá thuê</HeadCell>
    </HeadRow>
    {rows.map(([code, sub, days, room, name, price], i) => (
      <Row key={i}>
        <CheckCell>
          <Checkbox />
        </CheckCell>
        <Cell>
          <Code>{code}</Code>
          <SubCode>{sub}</SubCode>
        </Cell>
        <Cell>
          {days && (
            <Chips>
              <Chip>Còn hạn</Chip>
              <Chip>Còn {days} ngày</Chip>
            </Chips>
          )}
        </Cell>
        <Cell>
          <ButtonGrid>
            {actions.map((a, k) => (
              <ActionButton key={k} $bg={a.bg}>
                <Icon size={30} sw={1.6}>
                  {a.art}
                </Icon>
              </ActionButton>
            ))}
          </ButtonGrid>
        </Cell>
        <Cell>
          <Line $c="#18181b" $w={500}>
            29-CT0154
          </Line>
          <Line $c="#4f5866" $ls={-0.12}>
            29-CT0154{room}
          </Line>
        </Cell>
        <Cell>
          <Line $c="#18181b" $w={500} $ls={-0.25}>
            {name}
          </Line>
        </Cell>
        <Cell>
          <Line $c="#27272a">{price}</Line>
          <Line $c="#27272a">đ</Line>
        </Cell>
      </Row>
    ))}
  </Table>
);

/* ---------- scrollbar, toast, floating widget ---------- */

const Scrollbar = styled.div`
  width: 29px;
  flex: none;
  background: #fafafa;
  border-left: 2px solid #e8e8e8;
  border-right: 2px solid #ececec;
  padding-left: 5px;
`;

const Thumb = styled.div`
  width: 16px;
  height: 910px;
  border-radius: 0 0 8px 8px;
  background: #c1c1c1;
`;

const EdgeWidget = styled.div`
  position: absolute;
  left: 2880px;
  top: 746px;
  width: 60px;
  height: 124px;
  border-radius: 16px;
  box-shadow: 0 0 6px rgba(0, 0, 0, 0.6), 0 0 80px rgba(0, 0, 0, 0.14);
`;

const Toast = styled.div`
  position: absolute;
  left: 2090px;
  top: 1645px;
  width: 712px;
  height: 107px;
  border: 2px solid #ededed;
  border-radius: 16px;
  background: #fff;
  box-shadow: 0 8px 24px rgba(0, 0, 0, 0.1);
  display: flex;
  align-items: center;
  gap: 18px;
  padding-left: 28px;
  font-size: 26px;
  font-weight: 500;
  letter-spacing: 0;
  color: #2c2c2e;
  white-space: nowrap;
`;

export default function App() {
  return (
    <Screen>
      <GlobalStyle />
      <MacMenu />
      <Tabs />
      <BrowserToolbar />
      <Page>
        <SideNav />
        <Main>
          <StatRow>
            {stats.map((s) => (
              <StatCard key={s.label}>
                <HexPattern />
                <Shield line={s.line} fill={s.fill} dot={s.dot} square={s.square} />
                <StatLabel $c={s.c}>{s.label}</StatLabel>
              </StatCard>
            ))}
          </StatRow>
          <Panel>
            <FilterPanel />
            <ContractTable />
          </Panel>
        </Main>
        <Scrollbar>
          <Thumb />
        </Scrollbar>
      </Page>
      <EdgeWidget />
      <Toast>
        <svg width="32" height="32" viewBox="0 0 32 32" fill="none">
          <circle cx="16" cy="16" r="16" fill="#2b2b2d" />
          <path d="M9.500 17.500l4.500 5L22.500 11" stroke="#fff" strokeWidth="3" strokeLinecap="round" strokeLinejoin="round" />
        </svg>
        Thông tin đã được cập nhật lưu trữ thành công
      </Toast>
    </Screen>
  );
}
